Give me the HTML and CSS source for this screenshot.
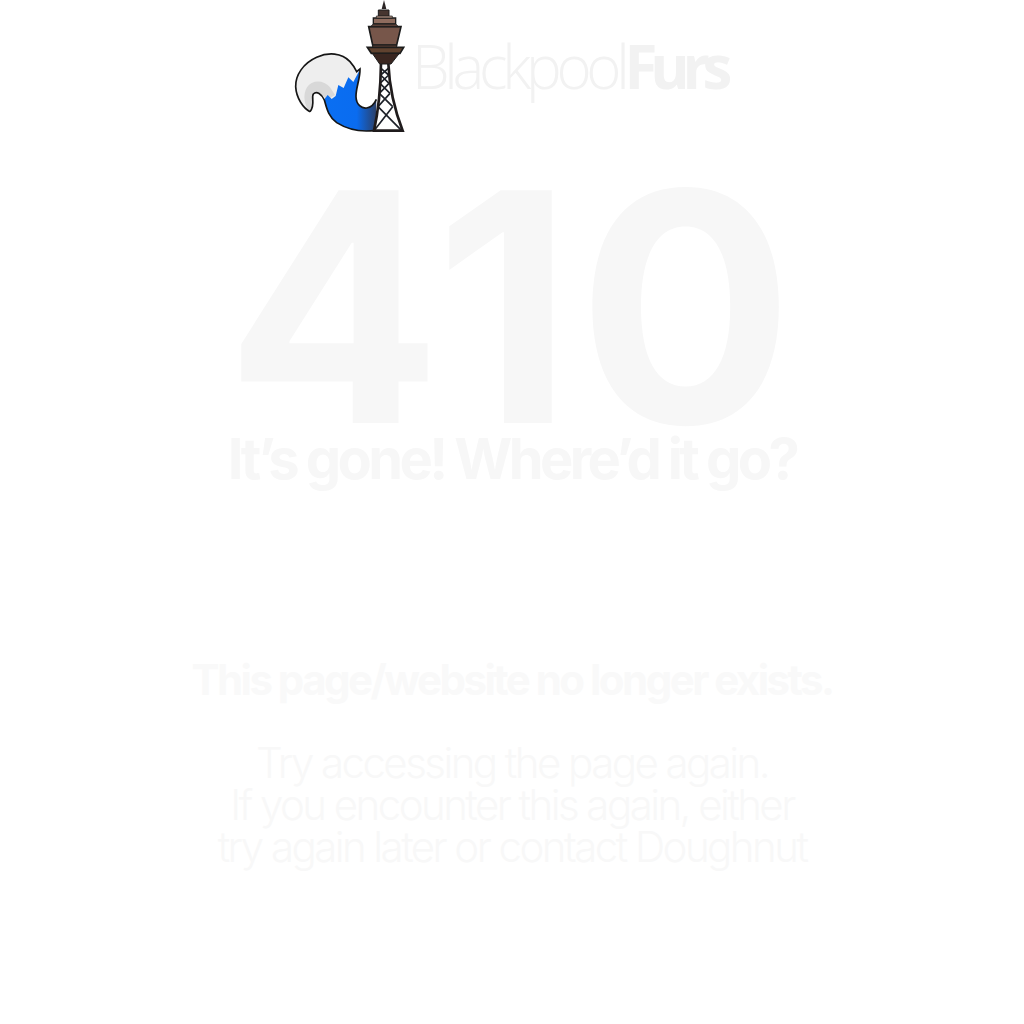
FILE: index.html
```html
<!DOCTYPE html>
<html lang="en">
<head>
    <meta charset="UTF-8">
    <title>410 - BlackpoolFurs</title>
    <link rel="stylesheet" href="styles.css">
</head>
<body>
    <div class="container">
        <div class="logo">
            <svg class="logo-mark" width="130" height="140" viewBox="0 0 390 420">
                <defs>
                    <linearGradient id="waveBlue" gradientUnits="userSpaceOnUse" x1="118" y1="0" x2="275" y2="0">
                        <stop offset="0" stop-color="#0a6ff2"/>
                        <stop offset="0.62" stop-color="#0a6cf0"/>
                        <stop offset="1" stop-color="#2c3f66"/>
                    </linearGradient>
                </defs>
                <!-- tail -->
                <path d="M75 335C55 325 34 295 32 260C31 225 55 190 95 172C130 156 170 158 195 185C205 196 210 205 215 215L225 207C226 235 212 265 213 290C214 315 230 326 245 324C258 322 268 312 274 298L272 391C235 396 190 390 155 368C130 350 125 325 118 300C110 282 95 272 85 282C78 292 92 315 75 335Z" fill="#eeeeee"/>
                <path d="M75 335C58 318 52 285 66 262C80 240 115 238 135 262L150 285L125 300C110 280 95 272 85 282C78 292 92 315 75 335Z" fill="#d8d8d8"/>
                <path d="M118 298L128 285L140 297L152 288L160 255L176 264L190 232L205 246L224 210C226 235 212 265 213 290C214 315 230 326 245 324C258 322 268 312 274 298L272 391C235 396 190 390 155 368C130 350 125 325 118 300Z" fill="url(#waveBlue)"/>
                <path d="M75 335C55 325 34 295 32 260C31 225 55 190 95 172C130 156 170 158 195 185C205 196 210 205 215 215L225 207C226 235 212 265 213 290C214 315 230 326 245 324C258 322 268 312 274 298" fill="none" stroke="#161616" stroke-width="5"/>
                <path d="M272 391C235 396 190 390 155 368C130 350 125 325 118 300C110 282 95 272 85 282C78 292 92 315 75 335" fill="none" stroke="#161616" stroke-width="5"/>
                <!-- lattice -->
                <path d="M288 205L311 225M310 205L287 225M287 225L312 250M311 225L285 250M285 250L315 280M312 250L283 280M283 280L323 320M315 280L279 320M279 320L350 392M323 320L267 392" fill="none" stroke="#1d2129" stroke-width="5"/>
                <path d="M288 190C287 260 283 320 267 392H353C325 320 313 260 310 190" fill="none" stroke="#1f1b1c" stroke-width="8"/>
                <!-- tower head -->
                <path d="M297 0L304 27H290Z" fill="#2b2525"/>
                <path d="M280 30H312V49H280Z" fill="#46352f" stroke="#1c1c1c" stroke-width="3"/>
                <path d="M265 54H332V72H265Z" fill="#8f6c5e" stroke="#1c1c1c" stroke-width="4"/>
                <path d="M274 48H322V54H274Z" fill="#a98a7b" stroke="#1c1c1c" stroke-width="2"/>
                <path d="M251 80H348L335 135H263Z" fill="#77564a" stroke="#1c1c1c" stroke-width="5"/>
                <path d="M265 72H332L340 80H257Z" fill="#5c4138" stroke="#1c1c1c" stroke-width="3"/>
                <path d="M247 142H356L345 160H259Z" fill="#60422f" stroke="#1c1c1c" stroke-width="5"/>
                <path d="M263 135H335V142H263Z" fill="#4b352d" stroke="#1c1c1c" stroke-width="3"/>
                <path d="M262 160H343L318 192H284Z" fill="#3a2620" stroke="#1c1c1c" stroke-width="3"/>
            </svg>
            <div class="logo-text">Blackpool<strong>Furs</strong></div>
        </div>
        <div class="code">410</div>
        <h1>It’s gone! Where’d it go?</h1>
        <h2>This page/website no longer exists.</h2>
        <p>Try accessing the page again.<br>If you encounter this again, either<br>try again later or contact Doughnut</p>
    </div>
</body>
</html>
```
FILE: styles.css
```css
* { margin: 0; padding: 0; box-sizing: border-box; }
body {
    background: white;
    font-family: Inter, sans-serif;
    min-height: 100vh;
}
.container {
    display: flex;
    flex-direction: column;
    align-items: center;
    text-align: center;
}
.logo {
    display: flex;
    align-items: center;
    height: 140px;
    width: 454px;
}
.logo-mark {
    flex: none;
}
.logo-text {
    font-family: "Open Sans", sans-serif;
    font-weight: 300;
    font-size: 60px;
    letter-spacing: -5.3px;
    color: #f2f2f2;
    line-height: 1;
    margin-left: -3px;
    margin-bottom: 8px;
}
.logo-text strong {
    font-weight: 700;
    letter-spacing: -7.2px;
}
.code {
    font-size: 320px;
    font-weight: 700;
    line-height: 240px;
    letter-spacing: 5px;
    color: #f7f7f7;
    margin-top: 47px;
}
h1 {
    font-size: 56px;
    font-weight: 700;
    letter-spacing: -3.6px;
    line-height: 58px;
    color: #f7f7f7;
    margin-top: 3px;
}
h2 {
    font-size: 42px;
    font-weight: 700;
    letter-spacing: -0.06em;
    line-height: 50px;
    color: #f9f9f9;
    margin-top: 167px;
}
p {
    font-size: 42px;
    font-weight: 300;
    letter-spacing: -2.55px;
    line-height: 42px;
    color: #f8f8f8;
    margin-top: 37px;
}
```
